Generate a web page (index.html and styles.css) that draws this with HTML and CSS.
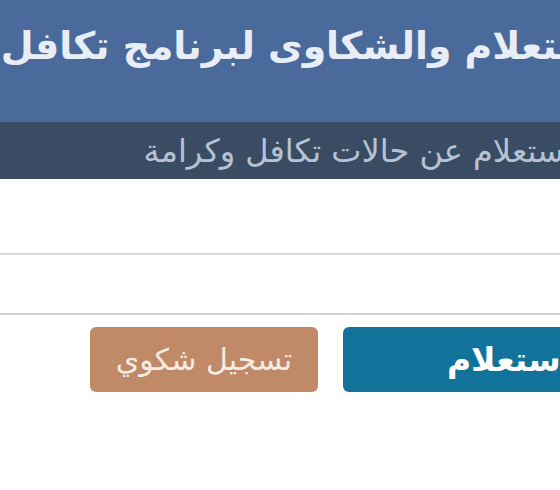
FILE: index.html
```html
<!DOCTYPE html>
<html lang="ar">
<head>
<meta charset="utf-8">
<title>الاستعلام والشكاوى</title>
<link rel="stylesheet" href="styles.css">
</head>
<body>
<div class="page" dir="rtl">
  <header class="hero">
    <h1 class="title">الاستعلام والشكاوى لبرنامج تكافل وكرامة</h1>
  </header>
  <div class="band">
    <p class="subtitle">الاستعلام عن حالات تكافل وكرامة</p>
  </div>
  <main class="form">
    <div class="field"></div>
    <div class="actions">
      <button class="btn btn-primary" type="button">استعلام</button>
      <button class="btn btn-secondary" type="button">تسجيل شكوي</button>
    </div>
  </main>
</div>
</body>
</html>
```
FILE: styles.css
```css
html, body {
  margin: 0;
  padding: 0;
  background: #ffffff;
  overflow: hidden;
}
body {
  width: 560px;
  height: 490px;
  font-family: "DejaVu Sans", sans-serif;
}
.page {
  width: 560px;
}
.hero {
  height: 122px;
  background: #4a6a9c;
  display: flex;
  align-items: flex-start;
  justify-content: flex-start;
  white-space: nowrap;
}
.title {
  margin: 20px -76px 0 0;
  font-size: 37.8px;
  font-weight: bold;
  line-height: 52px;
  color: #e9eef6;
}
.band {
  height: 57px;
  background: #3a4c63;
  white-space: nowrap;
}
.subtitle {
  margin: 0 -31px 0 0;
  padding-top: 9px;
  font-size: 32px;
  line-height: 40px;
  color: #b6c3d4;
}
.form {
  padding-top: 74px;
}
.field {
  height: 58px;
  border-top: 2px solid #d8d8d8;
  border-bottom: 2px solid #d4d4d4;
}
.actions {
  display: flex;
  gap: 25px;
  margin-top: 12px;
  margin-right: -116px;
}
.btn {
  height: 65px;
  border: none;
  border-radius: 6px;
  font-family: "DejaVu Sans", sans-serif;
  font-weight: bold;
  font-size: 33px;
  padding: 0;
}
.btn-primary {
  width: 333px;
  background: #11729a;
  color: #ffffff;
}
.btn-secondary {
  width: 228px;
  background: #c08a69;
  color: #f4ebe2;
  font-size: 30px;
  font-weight: normal;
}
```
